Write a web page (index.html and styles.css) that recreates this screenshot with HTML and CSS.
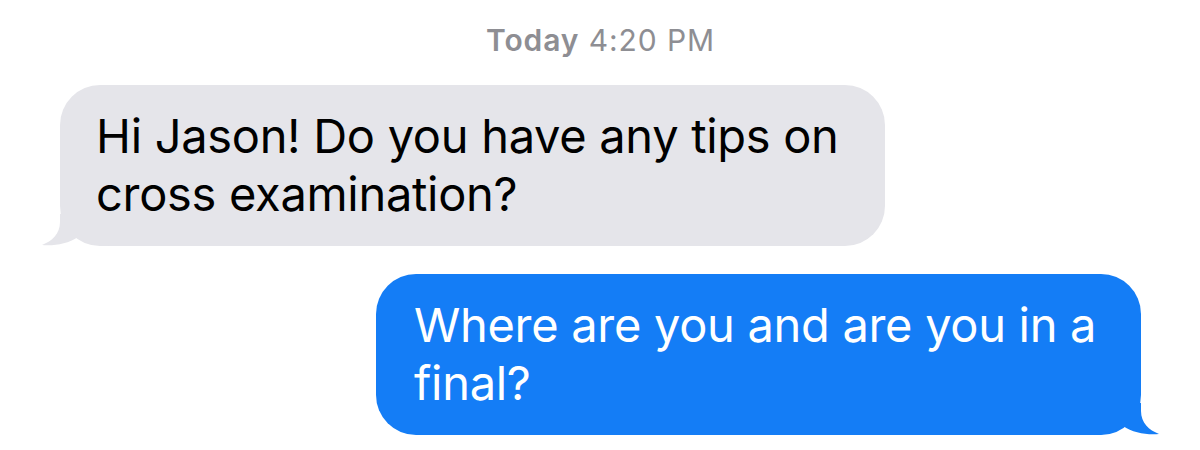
FILE: index.html
```html
<!DOCTYPE html>
<html lang="en">
<head>
<meta charset="utf-8">
<title>Messages</title>
<link rel="stylesheet" href="styles.css">
</head>
<body>
<main class="thread">
  <p class="stamp"><strong>Today</strong> 4:20 PM</p>

  <div class="row row--in">
    <div class="bubble bubble--in">
      Hi Jason! Do you have any tips on cross examination?
      <svg class="tail tail--in" viewBox="0 0 70 32" width="70" height="32" aria-hidden="true">
        <path d="M18 0 L18 8 C18 20 10 27 0 31 C12 32 26 30 36 23 C44 29 54 32 70 32 L70 0 Z"/>
      </svg>
    </div>
  </div>

  <div class="row row--out">
    <div class="bubble bubble--out">
      Where are you and are you in a final?
      <svg class="tail tail--out" viewBox="0 0 70 32" width="70" height="32" aria-hidden="true">
        <path d="M18 0 L18 8 C18 20 10 27 0 31 C12 32 26 30 36 23 C44 29 54 32 70 32 L70 0 Z"/>
      </svg>
    </div>
  </div>
</main>
</body>
</html>
```

FILE: styles.css
```css
* {
  box-sizing: border-box;
}

html,
body {
  margin: 0;
  background: #ffffff;
}

body {
  font-family: Inter, "Liberation Sans", Arial, sans-serif;
  -webkit-font-smoothing: antialiased;
}

.thread {
  display: flex;
  flex-direction: column;
  padding: 0 59px 0 60px;
}

.stamp {
  margin: 23px 0 0;
  text-align: center;
  font-size: 30px;
  line-height: 34px;
  letter-spacing: 0.9px;
  color: #8e8e93;
}

.stamp strong {
  font-weight: 600;
}

.row {
  display: flex;
}

.row--in {
  justify-content: flex-start;
  margin-top: 28px;
}

.row--out {
  justify-content: flex-end;
  margin-top: 28px;
}

.bubble {
  position: relative;
  border-radius: 40px;
  font-size: 47px;
  line-height: 58px;
  letter-spacing: -0.3px;
  padding: 22px 34px 23px 36px;
}

.bubble--in {
  width: 825px;
  background: #e5e5ea;
  color: #000000;
}

.bubble--out {
  width: 765px;
  background: #147df6;
  color: #ffffff;
  padding-left: 38px;
}

.tail {
  position: absolute;
  bottom: 0;
  display: block;
}

.tail--in {
  left: -18px;
  fill: #e5e5ea;
}

.tail--out {
  right: -18px;
  transform: scaleX(-1);
  fill: #147df6;
}
```
